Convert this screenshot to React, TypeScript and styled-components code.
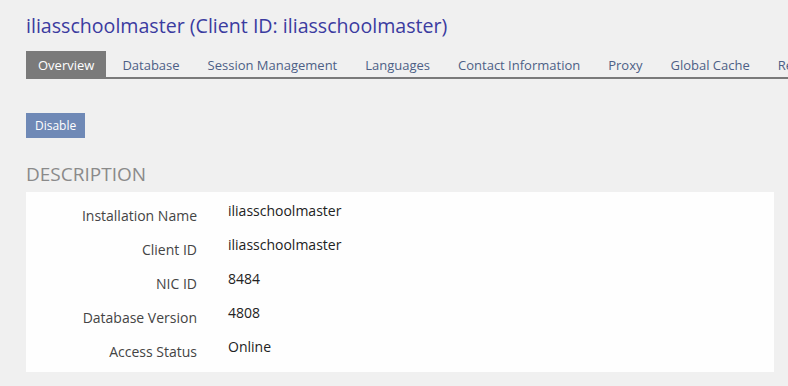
import styled, {createGlobalStyle} from 'styled-components';

const GlobalStyle = createGlobalStyle`
    html, body {
        margin: 0;
        background: #f0f0f0;
        font-family: "Open Sans", "Liberation Sans", sans-serif;
    }
`;

const Page = styled.div`
    padding: 12px 14px 0 26px;
    overflow: hidden;
`;

const Title = styled.h1`
    margin: 0;
    font-size: 19.6px;
    font-weight: 400;
    line-height: 27px;
    color: #3b3ba0;
    white-space: nowrap;
`;

const Tabs = styled.nav`
    display: flex;
    gap: 4px;
    margin: 12px -14px 0 0;
    border-bottom: 2px solid #7a7a7a;
    white-space: nowrap;
`;

const Tab = styled.a<{active?: boolean}>`
    display: block;
    padding: 0 12px;
    height: 26px;
    line-height: 29px;
    font-size: 13px;
    color: ${props => (props.active ? '#fff' : '#4d5f86')};
    background: ${props => (props.active ? '#7a7a7a' : 'transparent')};
    cursor: pointer;
`;

const Button = styled.button`
    display: block;
    margin-top: 34px;
    height: 25px;
    padding: 0 9px;
    border: 0;
    background: #6f89b6;
    color: #fff;
    font: 400 12px "Open Sans", "Liberation Sans", sans-serif;
`;

const Heading = styled.h2`
    margin: 24px 0 0;
    font-size: 19px;
    font-weight: 400;
    line-height: 24px;
    color: #8a8a8a;
    text-transform: uppercase;
`;

const Panel = styled.dl`
    display: grid;
    grid-template-columns: 171px 1fr;
    grid-auto-rows: 34px;
    column-gap: 31px;
    margin: 6px 0 0;
    padding: 7px 0 3px;
    background: #fefefe;
`;

const Label = styled.dt`
    padding-top: 7px;
    text-align: right;
    font-size: 14px;
    line-height: 19px;
    color: #444;
`;

const Value = styled.dd`
    margin: 0;
    padding-top: 2px;
    font-size: 14px;
    line-height: 20px;
    color: #222;
`;

const tabs = [
    'Overview',
    'Database',
    'Session Management',
    'Languages',
    'Contact Information',
    'Proxy',
    'Global Cache',
    'Reports',
];

const rows: [string, string][] = [
    ['Installation Name', 'iliasschoolmaster'],
    ['Client ID', 'iliasschoolmaster'],
    ['NIC ID', '8484'],
    ['Database Version', '4808'],
    ['Access Status', 'Online'],
];

export default function App() {
    return (
        <Page>
            <GlobalStyle />
            <Title>iliasschoolmaster (Client ID: iliasschoolmaster)</Title>
            <Tabs>
                {tabs.map((name, i) => (
                    <Tab key={name} active={i === 0}>{name}</Tab>
                ))}
            </Tabs>
            <Button>Disable</Button>
            <Heading>Description</Heading>
            <Panel>
                {rows.map(([label, value]) => (
                    <>
                        <Label key={label}>{label}</Label>
                        <Value key={label + '-v'}>{value}</Value>
                    </>
                ))}
            </Panel>
        </Page>
    );
}
